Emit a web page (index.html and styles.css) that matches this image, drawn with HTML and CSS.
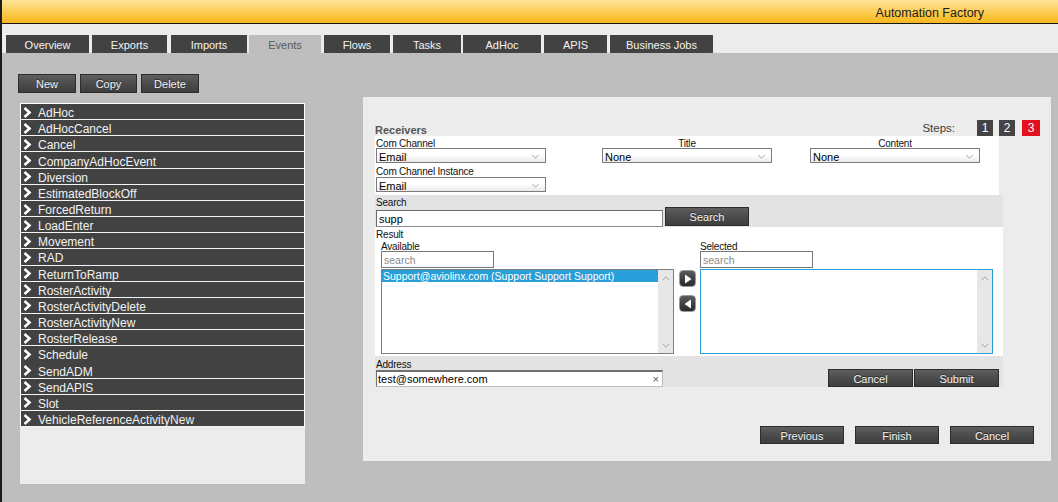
FILE: index.html
```html
<!DOCTYPE html>
<html>
<head>
<meta charset="utf-8">
<title>Automation Factory</title>
<link rel="stylesheet" href="styles.css">
</head>
<body>
<div class="page">
  <header class="topbar"><span class="app-title">Automation Factory</span></header>
  <nav class="tabs">
    <span class="tab w-overview">Overview</span>
    <span class="tab w-exports">Exports</span>
    <span class="tab w-imports">Imports</span>
    <span class="tab tab-active w-events">Events</span>
    <span class="tab w-flows">Flows</span>
    <span class="tab w-tasks">Tasks</span>
    <span class="tab w-adhoc">AdHoc</span>
    <span class="tab w-apis">APIS</span>
    <span class="tab w-business">Business Jobs</span>
  </nav>
  <main class="main">
    <section class="left">
      <div class="toolbar">
        <button class="btn btn-new">New</button>
        <button class="btn btn-copy">Copy</button>
        <button class="btn btn-delete">Delete</button>
      </div>
      <div class="list-panel">
        <ul class="event-list">
          <li><svg class="chev" viewBox="0 0 9 11"><polyline points="1.5,1 6.5,5.5 1.5,10"/></svg><span>AdHoc</span></li>
          <li><svg class="chev" viewBox="0 0 9 11"><polyline points="1.5,1 6.5,5.5 1.5,10"/></svg><span>AdHocCancel</span></li>
          <li><svg class="chev" viewBox="0 0 9 11"><polyline points="1.5,1 6.5,5.5 1.5,10"/></svg><span>Cancel</span></li>
          <li><svg class="chev" viewBox="0 0 9 11"><polyline points="1.5,1 6.5,5.5 1.5,10"/></svg><span>CompanyAdHocEvent</span></li>
          <li><svg class="chev" viewBox="0 0 9 11"><polyline points="1.5,1 6.5,5.5 1.5,10"/></svg><span>Diversion</span></li>
          <li><svg class="chev" viewBox="0 0 9 11"><polyline points="1.5,1 6.5,5.5 1.5,10"/></svg><span>EstimatedBlockOff</span></li>
          <li><svg class="chev" viewBox="0 0 9 11"><polyline points="1.5,1 6.5,5.5 1.5,10"/></svg><span>ForcedReturn</span></li>
          <li><svg class="chev" viewBox="0 0 9 11"><polyline points="1.5,1 6.5,5.5 1.5,10"/></svg><span>LoadEnter</span></li>
          <li><svg class="chev" viewBox="0 0 9 11"><polyline points="1.5,1 6.5,5.5 1.5,10"/></svg><span>Movement</span></li>
          <li><svg class="chev" viewBox="0 0 9 11"><polyline points="1.5,1 6.5,5.5 1.5,10"/></svg><span>RAD</span></li>
          <li><svg class="chev" viewBox="0 0 9 11"><polyline points="1.5,1 6.5,5.5 1.5,10"/></svg><span>ReturnToRamp</span></li>
          <li><svg class="chev" viewBox="0 0 9 11"><polyline points="1.5,1 6.5,5.5 1.5,10"/></svg><span>RosterActivity</span></li>
          <li><svg class="chev" viewBox="0 0 9 11"><polyline points="1.5,1 6.5,5.5 1.5,10"/></svg><span>RosterActivityDelete</span></li>
          <li><svg class="chev" viewBox="0 0 9 11"><polyline points="1.5,1 6.5,5.5 1.5,10"/></svg><span>RosterActivityNew</span></li>
          <li><svg class="chev" viewBox="0 0 9 11"><polyline points="1.5,1 6.5,5.5 1.5,10"/></svg><span>RosterRelease</span></li>
          <li class="no-sep"><svg class="chev" viewBox="0 0 9 11"><polyline points="1.5,1 6.5,5.5 1.5,10"/></svg><span>Schedule</span></li>
          <li><svg class="chev" viewBox="0 0 9 11"><polyline points="1.5,1 6.5,5.5 1.5,10"/></svg><span>SendADM</span></li>
          <li><svg class="chev" viewBox="0 0 9 11"><polyline points="1.5,1 6.5,5.5 1.5,10"/></svg><span>SendAPIS</span></li>
          <li><svg class="chev" viewBox="0 0 9 11"><polyline points="1.5,1 6.5,5.5 1.5,10"/></svg><span>Slot</span></li>
          <li><svg class="chev" viewBox="0 0 9 11"><polyline points="1.5,1 6.5,5.5 1.5,10"/></svg><span>VehicleReferenceActivityNew</span></li>
        </ul>
      </div>
    </section>

    <section class="wizard">
      <div class="wizard-head">
        <span class="receivers">Receivers</span>
        <div class="steps">
          <span class="steps-label">Steps:</span>
          <span class="step">1</span>
          <span class="step">2</span>
          <span class="step step-current">3</span>
        </div>
      </div>

      <div class="form">
        <div class="sec sec-channel">
          <div class="channel-row">
            <div class="field col1">
              <div class="lbl">Com Channel</div>
              <div class="select"><span>Email</span><svg class="dd" viewBox="0 0 10 6"><polyline points="1,1 5,5 9,1"/></svg></div>
            </div>
            <div class="field col2">
              <div class="lbl lbl-center">Title</div>
              <div class="select"><span>None</span><svg class="dd" viewBox="0 0 10 6"><polyline points="1,1 5,5 9,1"/></svg></div>
            </div>
            <div class="field col3">
              <div class="lbl lbl-center">Content</div>
              <div class="select"><span>None</span><svg class="dd" viewBox="0 0 10 6"><polyline points="1,1 5,5 9,1"/></svg></div>
            </div>
          </div>
          <div class="field col1">
            <div class="lbl lbl-2">Com Channel Instance</div>
            <div class="select"><span>Email</span><svg class="dd" viewBox="0 0 10 6"><polyline points="1,1 5,5 9,1"/></svg></div>
          </div>
        </div>

        <div class="sec sec-search">
          <div class="lbl">Search</div>
          <div class="search-row">
            <input class="txt txt-search" type="text" value="supp">
            <button class="btn btn-search">Search</button>
          </div>
        </div>

        <div class="sec sec-result">
          <div class="lbl">Result</div>
          <div class="dual">
            <div class="pick pick-available">
              <div class="lbl">Available</div>
              <input class="txt txt-filter" type="text" placeholder="search">
              <div class="listbox">
                <div class="lb-items">
                  <div class="lb-item lb-item-selected">Support@aviolinx.com (Support Support Support)</div>
                </div>
                <div class="lb-track">
                  <svg class="sb" viewBox="0 0 10 6"><polyline points="1,5 5,1 9,5"/></svg>
                  <svg class="sb" viewBox="0 0 10 6"><polyline points="1,1 5,5 9,1"/></svg>
                </div>
              </div>
            </div>
            <div class="movers">
              <span class="mover"><svg viewBox="0 0 8 10"><polygon points="1,0.5 7.5,5 1,9.5"/></svg></span>
              <span class="mover"><svg viewBox="0 0 8 10"><polygon points="7,0.5 0.5,5 7,9.5"/></svg></span>
            </div>
            <div class="pick pick-selected">
              <div class="lbl">Selected</div>
              <input class="txt txt-filter" type="text" placeholder="search">
              <div class="listbox listbox-focus">
                <div class="lb-items"></div>
                <div class="lb-track">
                  <svg class="sb" viewBox="0 0 10 6"><polyline points="1,5 5,1 9,5"/></svg>
                  <svg class="sb" viewBox="0 0 10 6"><polyline points="1,1 5,5 9,1"/></svg>
                </div>
              </div>
            </div>
          </div>
        </div>

        <div class="sec sec-address">
          <div class="lbl lbl-addr">Address</div>
          <div class="address-row">
            <div class="txt txt-address"><span>test@somewhere.com</span><span class="clear">×</span></div>
            <div class="pair">
              <button class="btn btn-pair">Cancel</button>
              <button class="btn btn-pair">Submit</button>
            </div>
          </div>
        </div>
      </div>

      <div class="wizard-actions">
        <button class="btn btn-wiz">Previous</button>
        <button class="btn btn-wiz">Finish</button>
        <button class="btn btn-wiz">Cancel</button>
      </div>
    </section>
  </main>
</div>
</body>
</html>
```

FILE: styles.css
```css
* { box-sizing: border-box; }

html, body {
  margin: 0;
  padding: 0;
  height: 100%;
}

body {
  font-family: "Liberation Sans", Arial, sans-serif;
  font-size: 11px;
  color: #000;
  background: #bebebe;
}

.page {
  width: 1058px;
  height: 502px;
  display: flex;
  flex-direction: column;
  border-left: 2px solid #1c1c1c;
  overflow: hidden;
}

/* ---------- header ---------- */
.topbar {
  height: 24px;
  flex: 0 0 24px;
  border-bottom: 1px solid #151515;
  background: linear-gradient(#fee49b 0%, #fcd265 40%, #f9bf2f 80%, #f8b825 100%);
  display: flex;
  justify-content: flex-end;
  align-items: center;
  padding-right: 74px;
  padding-top: 2px;
}

.app-title {
  font-size: 12.5px;
  color: #1b1b1b;
}

/* ---------- tabs ---------- */
.tabs {
  height: 29px;
  flex: 0 0 29px;
  background: #ececec;
  display: flex;
  align-items: flex-end;
  padding-left: 4px;
  gap: 3px;
}

.tab {
  height: 18px;
  background: #424242;
  color: #f4f4f4;
  font-size: 11px;
  display: flex;
  align-items: center;
  justify-content: center;
  padding-top: 2px;
}

.tab-active {
  background: #bdbdbd;
  color: #5a5a5a;
}

.w-overview { width: 83px; }
.w-exports { width: 75px; }
.w-imports { width: 76px; margin-left: 1px; }
.w-events { width: 72px; margin-left: -1px; }
.w-flows { width: 66px; }
.w-tasks { width: 68px; }
.w-adhoc { width: 78px; margin-left: -1px; }
.w-apis { width: 63px; }
.w-business { width: 103px; }

/* ---------- main ---------- */
.main {
  flex: 1;
  background: #bebebe;
  display: flex;
  align-items: flex-start;
}

.left {
  width: 287px;
  margin-left: 16px;
  padding-top: 21px;
}

.toolbar {
  display: flex;
  gap: 4px;
}

.btn {
  font-family: "Liberation Sans", Arial, sans-serif;
  font-size: 11px;
  color: #f3f3f3;
  background: linear-gradient(#5e5e5e 0%, #4c4c4c 50%, #3e3e3e 100%);
  border: 1px solid #2c2c2c;
  padding: 1px 0 0;
  margin: 0;
  height: 19px;
  text-shadow: 0 -1px 0 #2a2a2a;
  cursor: pointer;
}

.btn-new { width: 58px; }
.btn-copy { width: 57px; }
.btn-delete { width: 58px; }

.list-panel {
  margin-top: 10px;
  margin-left: 2px;
  width: 285px;
  height: 381px;
  background: #ececec;
}

.event-list {
  list-style: none;
  margin: 0;
  padding: 0;
  border: 1px solid #fff;
  border-bottom: none;
}

.event-list li {
  height: 16.16px;
  background: #424242;
  border-bottom: 1px solid #f4f4f4;
  color: #f2f2f2;
  font-size: 12px;
  display: flex;
  align-items: center;
  padding-left: 2px;
  white-space: nowrap;
}

.event-list li span {
  padding-top: 3px;
}

.event-list li.no-sep {
  border-bottom-color: #424242;
}

.chev {
  width: 9px;
  height: 11px;
  margin-right: 6px;
  margin-top: 1px;
  flex: 0 0 9px;
}

.chev polyline {
  fill: none;
  stroke: #fff;
  stroke-width: 2.6;
  stroke-linejoin: miter;
}

/* ---------- wizard ---------- */
.wizard {
  margin-left: 58px;
  margin-top: 44px;
  width: 688px;
  height: 364px;
  background: #ececec;
  padding: 23px 11px 0 12px;
}

.wizard-head {
  height: 16px;
  display: flex;
  justify-content: space-between;
  align-items: flex-end;
}

.receivers {
  font-weight: bold;
  font-size: 11px;
  color: #555;
  line-height: 12px;
}

.steps {
  display: flex;
  align-items: center;
  height: 16px;
  margin-top: -1px;
}

.steps-label {
  font-size: 11.5px;
  color: #3c3c3c;
  margin-right: 16px;
}

.step {
  width: 16px;
  height: 16px;
  background: #444;
  color: #fff;
  font-size: 12px;
  display: flex;
  align-items: center;
  justify-content: center;
  margin-left: 6px;
}

.step:first-of-type { margin-left: 0; }

.step-current {
  background: #e3101e;
  margin-left: 7px;
  width: 18px;
}

.form {
  width: 628px;
}

.sec {
  width: 628px;
}

.lbl {
  font-size: 10px;
  letter-spacing: -0.2px;
  padding-top: 3px;
  line-height: 9px;
  height: 12px;
  color: #111;
  white-space: nowrap;
}

.lbl-center { text-align: center; }
.lbl-2 { padding-top: 4px; height: 14px; }

.sec-channel {
  width: 624px;
  background: #fff;
  padding: 0 0 3px 1px;
}

.channel-row {
  display: flex;
}

.field { width: 170px; }
.col2 { margin-left: 56px; }
.col3 { margin-left: 38px; }

.select {
  height: 15px;
  border: 1px solid #7b7b7b;
  background: linear-gradient(#ffffff 0%, #ffffff 45%, #eaeaea 100%);
  display: flex;
  align-items: center;
  justify-content: space-between;
  padding: 2px 5px 0 2px;
  font-size: 11px;
}

.dd {
  width: 9px;
  height: 5px;
}

.dd polyline, .sb polyline {
  fill: none;
  stroke: #8a8a8a;
  stroke-width: 0.9;
}

.sec-search {
  background: #e3e3e3;
  padding: 0 0 1px 1px;
}

.search-row {
  display: flex;
  align-items: flex-end;
  gap: 2px;
  height: 19px;
}

.txt {
  font-family: "Liberation Sans", Arial, sans-serif;
  font-size: 11px;
  color: #000;
  border: 1px solid #8a8a8a;
  border-top-color: #6a6a6a;
  border-left-color: #6a6a6a;
  background: #fff;
  padding: 0 2px;
  margin: 0;
  outline: none;
}

.txt-search {
  width: 287px;
  height: 17px;
  margin-bottom: -1px;
}

.btn-search {
  width: 84px;
  height: 19px;
}

.sec-result {
  background: #fff;
  padding: 0 0 2px 1px;
}

.dual {
  display: flex;
  align-items: flex-start;
}

.pick-available { margin-left: 5px; }

.pick { width: 293px; }

.txt-filter {
  display: block;
  width: 113px;
  height: 17px;
  border: 1px solid #777;
  margin-bottom: 1px;
  font-size: 10.5px;
  padding-top: 1px;
}

.txt-filter::placeholder { color: #8a8a8a; }

.listbox {
  height: 85px;
  border: 1px solid #7f7f7f;
  display: flex;
  background: #fff;
}

.listbox-focus { border-color: #2a9fd8; }

.lb-items { flex: 1; }

.lb-item {
  height: 12px;
  line-height: 13px;
  font-size: 10.5px;
  padding-left: 1px;
  white-space: nowrap;
}

.lb-item-selected {
  background: #299fd9;
  color: #fff;
}

.lb-track {
  width: 15px;
  background: #e7e7e7;
  display: flex;
  flex-direction: column;
  justify-content: space-between;
  align-items: center;
  padding: 6px 0 5px;
}

.sb { width: 8px; height: 5px; }

.movers {
  width: 17px;
  margin: 31px 4px 0 5px;
  display: flex;
  flex-direction: column;
  gap: 8px;
}

.mover {
  width: 17px;
  height: 17px;
  border-radius: 4px;
  background: linear-gradient(#5a5a5a, #2a2a2a);
  border: 1px solid #9a9a9a;
  display: flex;
  align-items: center;
  justify-content: center;
}

.mover svg { width: 8px; height: 10px; }
.mover polygon { fill: #fff; }

.sec-address {
  background: #e3e3e3;
  padding: 0 0 0 1px;
}

.lbl-addr { height: 13px; padding-top: 4px; }

.address-row {
  height: 18px;
  display: flex;
  justify-content: space-between;
  align-items: flex-start;
}

.txt-address {
  width: 287px;
  height: 17px;
  margin-top: 1px;
  display: flex;
  align-items: center;
  justify-content: space-between;
  padding: 0 3px 0 1px;
  border-color: #bdbdbd;
  border-top: 2px solid #707070;
  border-left: 1px solid #707070;
}

.clear {
  color: #555;
  font-size: 11px;
}

.pair {
  display: flex;
  gap: 1px;
  margin-right: 4px;
}

.btn-pair {
  width: 85px;
  height: 18px;
}

.wizard-actions {
  margin-top: 39px;
  margin-right: 6px;
  display: flex;
  justify-content: flex-end;
  gap: 11px;
}

.btn-wiz {
  width: 84px;
  height: 18px;
}
```
